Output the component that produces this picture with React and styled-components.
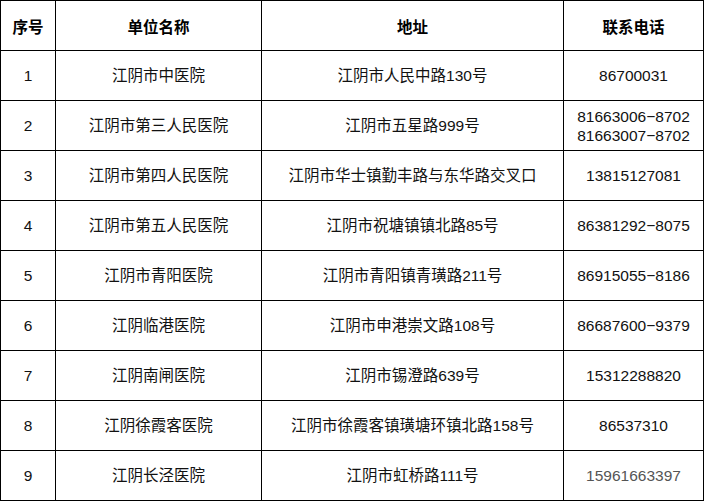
import React from "react";
import styled, { createGlobalStyle } from "styled-components";

const GlobalStyle = createGlobalStyle`
  html, body {
    margin: 0;
    padding: 0;
    background: #fff;
  }
  body {
    font-family: "Liberation Sans", "Noto Sans CJK SC", sans-serif;
    color: #111;
  }
`;

const Table = styled.table`
  width: 703px;
  border-collapse: collapse;
  table-layout: fixed;
  font-size: 15.5px;
`;

const Row = styled.tr`
  height: 50px;
`;

const HeadCell = styled.th`
  border: 1px solid #000;
  padding: 0;
  font-weight: 700;
  text-align: center;
  vertical-align: middle;
  color: #000;
`;

const Cell = styled.td`
  border: 1px solid #000;
  padding: 0;
  text-align: center;
  vertical-align: middle;
  line-height: 19px;
  color: ${(p) => (p.faded ? "#555" : "#111")};
  white-space: nowrap;
`;

const rows = [
  ["1", "江阴市中医院", "江阴市人民中路130号", ["86700031"]],
  ["2", "江阴市第三人民医院", "江阴市五星路999号", ["81663006−8702", "81663007−8702"]],
  ["3", "江阴市第四人民医院", "江阴市华士镇勤丰路与东华路交叉口", ["13815127081"]],
  ["4", "江阴市第五人民医院", "江阴市祝塘镇镇北路85号", ["86381292−8075"]],
  ["5", "江阴市青阳医院", "江阴市青阳镇青璜路211号", ["86915055−8186"]],
  ["6", "江阴临港医院", "江阴市申港崇文路108号", ["86687600−9379"]],
  ["7", "江阴南闸医院", "江阴市锡澄路639号", ["15312288820"]],
  ["8", "江阴徐霞客医院", "江阴市徐霞客镇璜塘环镇北路158号", ["86537310"]],
  ["9", "江阴长泾医院", "江阴市虹桥路111号", ["15961663397"]],
];

export default function App() {
  return (
    <>
      <GlobalStyle />
      <Table>
        <colgroup>
          <col style={{ width: 55 }} />
          <col style={{ width: 206 }} />
          <col style={{ width: 302 }} />
          <col style={{ width: 140 }} />
        </colgroup>
        <thead>
          <Row>
            <HeadCell>序号</HeadCell>
            <HeadCell>单位名称</HeadCell>
            <HeadCell>地址</HeadCell>
            <HeadCell>联系电话</HeadCell>
          </Row>
        </thead>
        <tbody>
          {rows.map(([no, name, addr, phones]) => (
            <Row key={no}>
              <Cell>{no}</Cell>
              <Cell>{name}</Cell>
              <Cell>{addr}</Cell>
              <Cell faded={no === "9"}>
                {phones.map((p) => (
                  <div key={p}>{p}</div>
                ))}
              </Cell>
            </Row>
          ))}
        </tbody>
      </Table>
    </>
  );
}
